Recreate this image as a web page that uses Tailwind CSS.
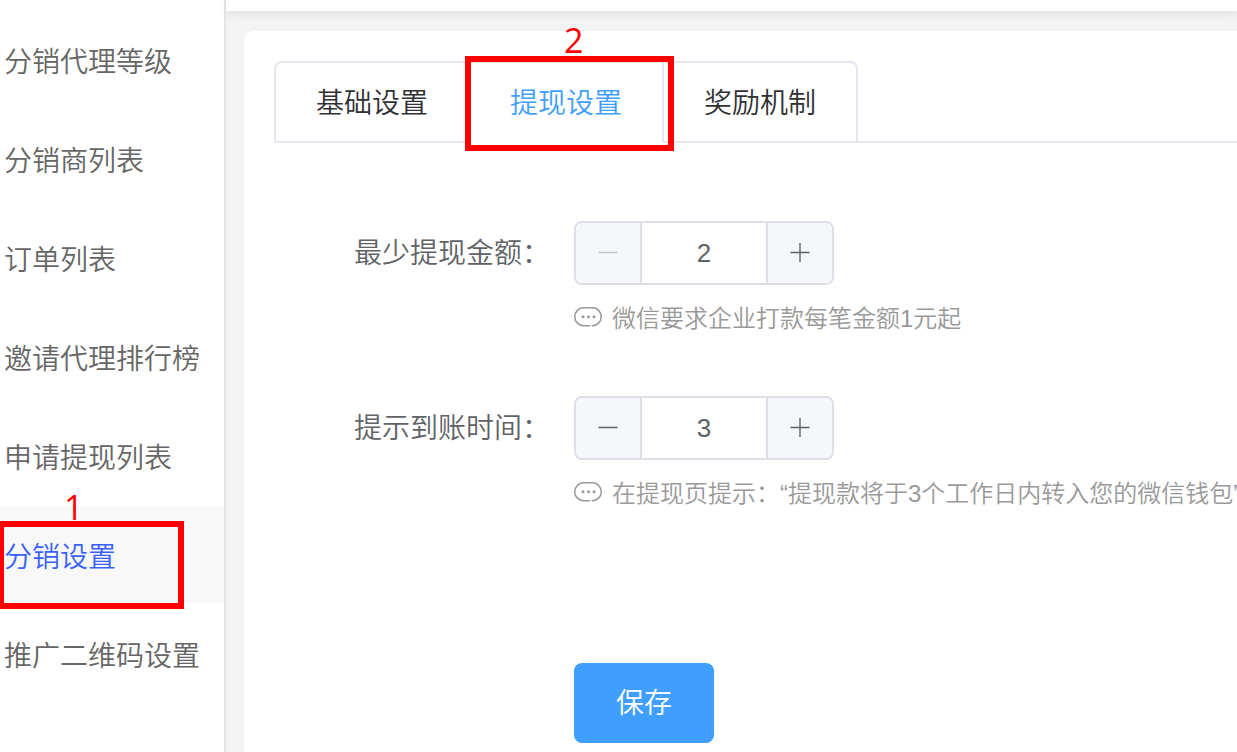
<!DOCTYPE html>
<html lang="zh-CN">
<head>
  <meta charset="UTF-8">
  <meta name="viewport" content="width=device-width, initial-scale=1.0">
  <title>分销设置</title>
  <script src="https://cdn.jsdelivr.net/npm/@tailwindcss/browser@4"></script>
</head>
<body class="flex h-screen overflow-hidden bg-white font-['Liberation_Sans','Noto_Sans_CJK_SC',sans-serif] font-[350] text-[28px] text-[#606266]">

  <!-- Side menu -->
  <aside class="w-[226px] shrink-0 border-r-2 border-[#e6e6e6] bg-white pt-[11px]">
    <nav class="flex flex-col gap-0.5 whitespace-nowrap text-[#666]">
      <a href="#" class="block h-[97px] pl-1 leading-[103px]">分销代理等级</a>
      <a href="#" class="block h-[97px] pl-1 leading-[103px]">分销商列表</a>
      <a href="#" class="block h-[97px] pl-1 leading-[103px]">订单列表</a>
      <a href="#" class="block h-[97px] pl-1 leading-[103px]">邀请代理排行榜</a>
      <a href="#" class="block h-[97px] pl-1 leading-[103px]">申请提现列表</a>
      <div class="relative">
        <a href="#" class="block h-[97px] bg-[#f8f8f8] pl-1 leading-[103px] text-[#3a62f8]">分销设置</a>
        <!-- Step 1 marker -->
        <div class="pointer-events-none absolute top-[15px] -left-0.5 h-[88px] w-[186px] border-6 border-[#ff0000]"></div>
        <span class="pointer-events-none absolute -top-4 left-16 font-['Open_Sans',sans-serif] text-[34px] leading-[34px] font-normal text-[#ff0000]">1</span>
      </div>
      <a href="#" class="block h-[97px] pl-1 leading-[103px]">推广二维码设置</a>
    </nav>
  </aside>

  <div class="flex min-w-0 flex-1 flex-col bg-[#f4f4f4]">
    <header class="h-[11px] shrink-0 bg-white shadow-[0_2px_12px_rgba(0,0,0,0.1)]"></header>

    <main class="mt-5 ml-[18px] flex-1 rounded-tl-[10px] bg-white pt-[30px] pl-[30px] shadow-[0_0_16px_rgba(0,0,0,0.02)]">
      <!-- Tabs -->
      <div class="flex border-b-2 border-[#e4e7ed] text-[#303133]">
        <div role="tablist" class="flex rounded-t-lg border-2 border-b-0 border-[#e4e7ed]">
          <button type="button" role="tab" class="h-[78px] px-10 pt-1">基础设置</button>
          <div class="relative">
            <button type="button" role="tab" aria-selected="true" class="-mb-0.5 h-20 border-l-2 border-[#e4e7ed] bg-white px-10 pt-1 pb-0.5 text-[#409eff]">提现设置</button>
            <!-- Step 2 marker -->
            <div class="pointer-events-none absolute -top-[7px] -left-[3px] z-10 h-[95px] w-[209px] border-6 border-[#ff0000]"></div>
            <span class="pointer-events-none absolute -top-10 left-24 z-10 font-['Open_Sans',sans-serif] text-[34px] leading-[34px] font-normal text-[#ff0000]">2</span>
          </div>
          <button type="button" role="tab" class="h-[78px] border-l-2 border-[#e4e7ed] px-10 pt-1">奖励机制</button>
        </div>
      </div>

      <form class="pt-[78px]">
        <div class="flex pb-[62px]">
          <label for="minAmount" class="w-[300px] shrink-0 pr-6 text-right leading-[66px]">最少提现金额：</label>
          <div class="min-w-0">
            <div class="flex h-16 w-[260px] overflow-hidden rounded-lg border-2 border-[#dcdfe6]">
              <button type="button" aria-label="减少" disabled class="flex w-16 shrink-0 items-center justify-center bg-[#f5f7fa] text-[#c0c4cc]">
                <svg class="size-5" viewBox="0 0 20 20" fill="none" stroke="currentColor" stroke-width="1.4"><path d="M0.5 9.5h19"/></svg>
              </button>
              <input id="minAmount" type="text" inputmode="numeric" value="2" class="min-w-0 flex-1 border-x-2 border-[#dcdfe6] bg-white text-center text-[26px] font-normal outline-none">
              <button type="button" aria-label="增加" class="flex w-16 shrink-0 items-center justify-center bg-[#f5f7fa]">
                <svg class="size-5" viewBox="0 0 20 20" fill="none" stroke="currentColor" stroke-width="1.4"><path d="M0.5 9.5h19M10 0v19"/></svg>
              </button>
            </div>
            <p class="mt-3.5 flex h-[35px] gap-2.5 text-2xl leading-10 whitespace-nowrap text-[#999]">
              <svg class="mt-2 h-5 w-7 shrink-0" viewBox="0 0 28 20" fill="none" stroke="currentColor" stroke-width="1.5"><path d="M16 18.8H9.8A9.05 9.05 0 0 1 9.8 0.7h8.4a9.05 9.05 0 0 1 0 18.1H17.6"/><g fill="currentColor" stroke="none"><circle cx="9" cy="9.7" r="1.5"/><circle cx="14.5" cy="9.7" r="1.5"/><circle cx="20" cy="9.7" r="1.5"/></g></svg>
              微信要求企业打款每笔金额1元起
            </p>
          </div>
        </div>

        <div class="flex pb-[62px]">
          <label for="arrivalDays" class="w-[300px] shrink-0 pr-6 text-right leading-[66px]">提示到账时间：</label>
          <div class="min-w-0">
            <div class="flex h-16 w-[260px] overflow-hidden rounded-lg border-2 border-[#dcdfe6]">
              <button type="button" aria-label="减少" class="flex w-16 shrink-0 items-center justify-center bg-[#f5f7fa]">
                <svg class="size-5" viewBox="0 0 20 20" fill="none" stroke="currentColor" stroke-width="1.4"><path d="M0.5 9.5h19"/></svg>
              </button>
              <input id="arrivalDays" type="text" inputmode="numeric" value="3" class="min-w-0 flex-1 border-x-2 border-[#dcdfe6] bg-white text-center text-[26px] font-normal outline-none">
              <button type="button" aria-label="增加" class="flex w-16 shrink-0 items-center justify-center bg-[#f5f7fa]">
                <svg class="size-5" viewBox="0 0 20 20" fill="none" stroke="currentColor" stroke-width="1.4"><path d="M0.5 9.5h19M10 0v19"/></svg>
              </button>
            </div>
            <p class="mt-3.5 flex h-[35px] gap-2.5 text-2xl leading-10 whitespace-nowrap text-[#999]">
              <svg class="mt-2 h-5 w-7 shrink-0" viewBox="0 0 28 20" fill="none" stroke="currentColor" stroke-width="1.5"><path d="M16 18.8H9.8A9.05 9.05 0 0 1 9.8 0.7h8.4a9.05 9.05 0 0 1 0 18.1H17.6"/><g fill="currentColor" stroke="none"><circle cx="9" cy="9.7" r="1.5"/><circle cx="14.5" cy="9.7" r="1.5"/><circle cx="20" cy="9.7" r="1.5"/></g></svg>
              在提现页提示：“提现款将于3个工作日内转入您的微信钱包”
            </p>
          </div>
        </div>

        <button type="button" class="mt-[92px] ml-[300px] h-20 rounded-lg bg-[#409eff] px-[42px] pt-0.5 text-white">保存</button>
      </form>
    </main>
  </div>

</body>
</html>
